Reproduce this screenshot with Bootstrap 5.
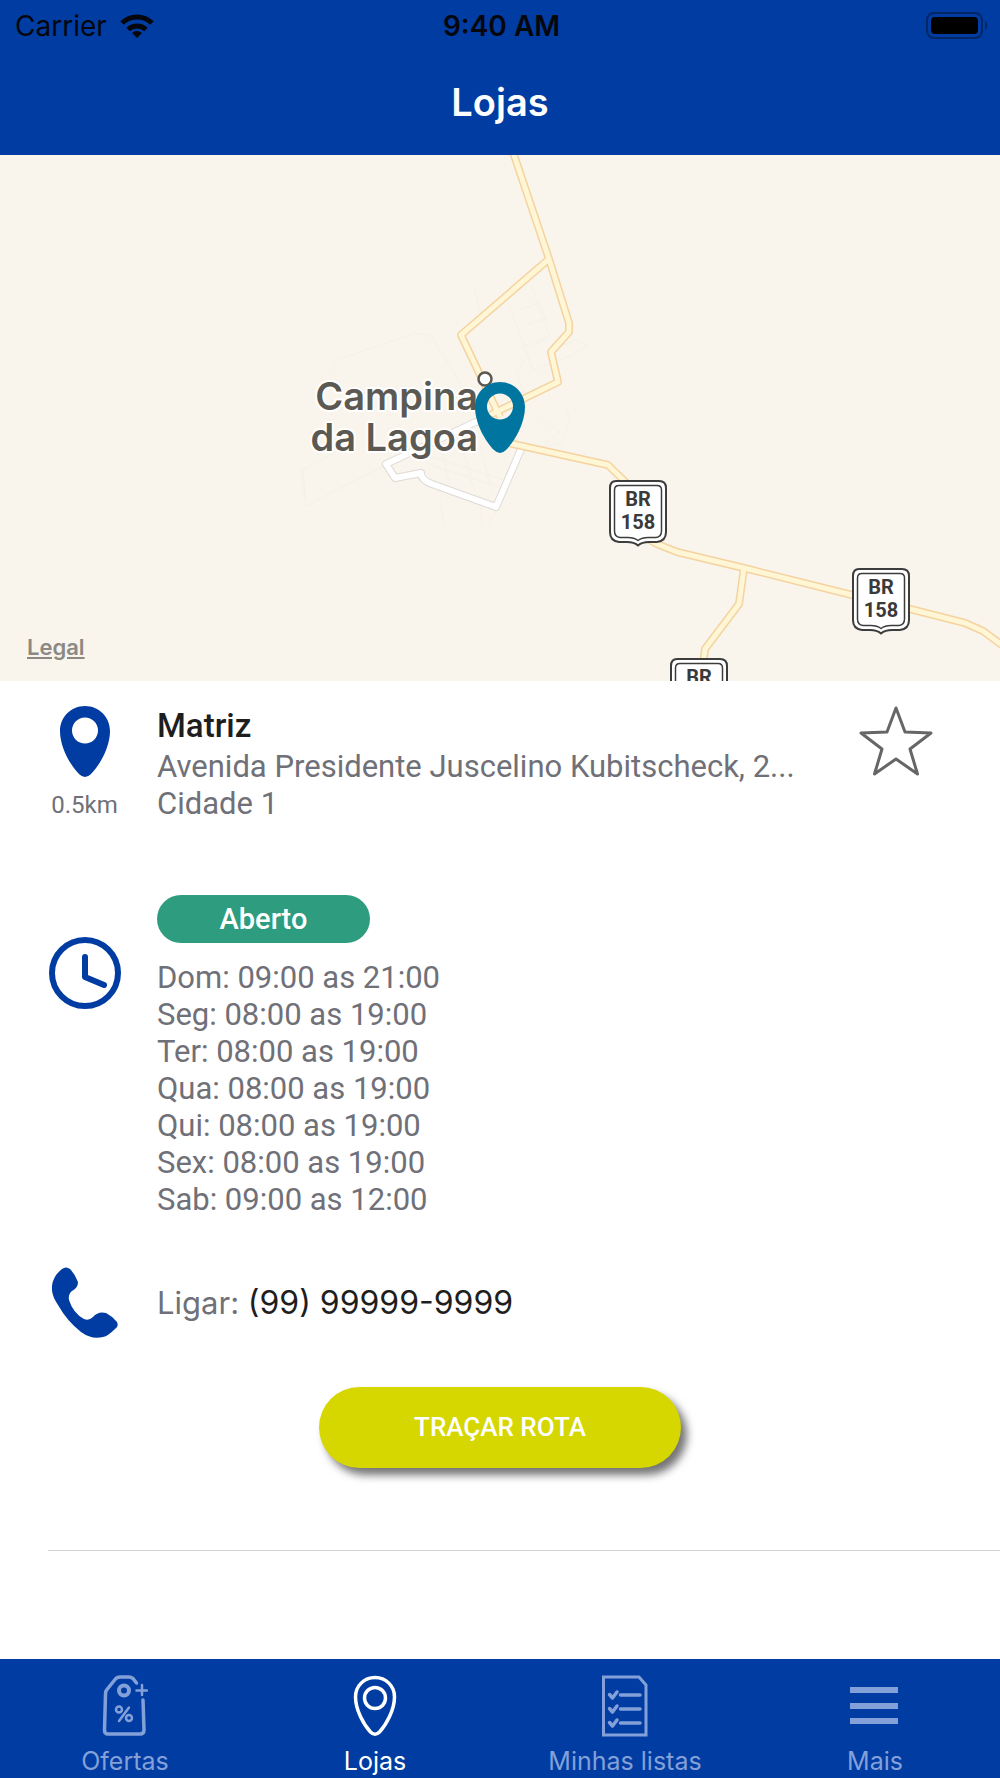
<!DOCTYPE html>
<html lang="pt-BR">
<head>
<meta charset="utf-8">
<meta name="viewport" content="width=device-width, initial-scale=1">
<title>Lojas</title>
<link rel="stylesheet" href="https://cdn.jsdelivr.net/npm/bootstrap@5.3.0/dist/css/bootstrap.min.css">
<style>
  :root { --brand: #003ca2; --brand-soft: #83a0d9; --ink: #1e1e1e; --muted: #6f7078; }
  body { font-family: Roboto, "Liberation Sans", sans-serif; color: var(--ink); background: #fff; }
  .ui-font { font-family: Inter, "Liberation Sans", sans-serif; }
  .top-area { background: var(--brand); height: 155px; }
  .status-bar { height: 51px; padding: 0 12px 0 15px; font-size: 28px; line-height: 32px; color: #05070c; }
  .status-bar > * { flex: 1 1 0; }
  .status-carrier { gap: 13px; }
  .page-title { font-size: 38px; line-height: 48px; font-weight: 600; padding-top: 27px; }
  .map-area { height: 526px; background: #f9f4ec; overflow: hidden; }
  .map-area > svg { display: block; width: 100%; height: 100%; }
  .legal-link { left: 27px; bottom: 20px; font-size: 22px; line-height: 28px; font-weight: 600; color: #8b8984; }
  .road-edge { fill: none; stroke: #f5d3a0; stroke-width: 8; stroke-linejoin: round; }
  .road-fill { fill: none; stroke: #fef6d5; stroke-width: 5; stroke-linejoin: round; }
  .street-edge { fill: none; stroke: #dedad5; stroke-width: 8; stroke-linejoin: round; }
  .street-fill { fill: none; stroke: #fff; stroke-width: 6; stroke-linejoin: round; }
  .town-lines { fill: none; stroke: #f5f0e8; stroke-width: 1; }
  .city-label { font: 600 38px Inter, "Liberation Sans", sans-serif; fill: #5c5952; stroke: #fff; stroke-width: 4; paint-order: stroke; stroke-linejoin: round; text-anchor: end; }
  .shield-text { font: 700 20px Roboto, "Liberation Sans", sans-serif; fill: #3a3a3a; text-anchor: middle; }
  .info-row { display: flex; gap: 36px; padding: 0 48px; }
  .icon-col { width: 73px; flex: none; display: flex; flex-direction: column; align-items: center; }
  .body-text { font-size: 31px; line-height: 37px; color: var(--muted); }
  .shop-name { font-size: 33px; line-height: 40px; font-weight: 500; margin-bottom: 2px; color: var(--ink); }
  .distance { font-size: 24px; line-height: 30px; color: var(--muted); margin-top: 12px; }
  .shop-row { padding-top: 25px; }
  .hours-row { padding-top: 73px; }
  .status-pill { width: 213px; height: 48px; border-radius: 24px; background: #2d9c7f; font-size: 29px; line-height: 48px; font-weight: 500; margin-bottom: 16px; padding: 0; }
  .hours-icon { padding-top: 42px; }
  .phone-row { padding-top: 49px; align-items: center; }
  .phone-text { font-size: 31px; line-height: 37px; color: var(--muted); }
  .phone-text a { color: var(--ink); text-decoration: none; font-size: 32px; }
  .route-btn { width: 362px; height: 81px; border-radius: 41px; margin-top: 49px; background: #d6d600; color: #fff; font-size: 26px; font-weight: 500; border: 0; box-shadow: 6px 7px 9px rgba(0,0,0,.55); }
  .route-btn:hover { background: #c6c600; color: #fff; }
  .divider { margin: 82px 0 0 48px; border-top: 1px solid #d2d2d2; }
  .tab-bar { background: var(--brand); height: 119px; padding-top: 14px; }
  .tab-bar a { flex: 1 1 0; color: var(--brand-soft); text-decoration: none; font-size: 25px; line-height: 30px; }
  .tab-bar a.active { color: #fff; }
  .tab-bar svg { display: block; margin: 0 auto 9px; }
</style>
<script src="https://cdn.jsdelivr.net/npm/bootstrap@5.3.0/dist/js/bootstrap.bundle.min.js"></script>
</head>
<body>
<div class="d-flex flex-column min-vh-100">
  <header class="top-area ui-font">
    <div class="status-bar d-flex align-items-center">
      <div class="status-carrier d-flex align-items-center">
        <span>Carrier</span>
        <svg width="34" height="24" viewBox="0 0 34 24" aria-hidden="true" fill="none" stroke="#05070c" stroke-width="5">
          <path d="M2 9a21.500 21.500 0 0 1 30 0"/><path d="M8 15.500a13 13 0 0 1 18 0"/><path d="M17 24l-5-5a7.500 7.500 0 0 1 10 0z" fill="#05070c" stroke="none"/>
        </svg>
      </div>
      <div class="text-center fw-semibold">9:40 AM</div>
      <div class="d-flex justify-content-end">
        <svg width="62" height="27" viewBox="0 0 62 27" aria-hidden="true">
          <rect x="1" y="1" width="55" height="25" rx="7" fill="none" stroke="#022765" stroke-width="2"/>
          <rect x="5" y="5" width="47" height="17" rx="4" fill="#000"/>
          <path d="M59 9c3 1 3 8 0 9z" fill="#022765"/>
        </svg>
      </div>
    </div>
    <h1 class="page-title text-white text-center mb-0">Lojas</h1>
  </header>

  <main class="flex-grow-1">
    <section class="map-area position-relative" aria-label="Mapa">
      <svg viewBox="0 0 1000 526" preserveAspectRatio="xMidYMid slice">
        <defs>
          <path id="pin" d="M25 0C39 0 50 11 50 25C50 42 39 60 31 68Q25 74 19 68C11 60 0 42 0 25C0 11 11 0 25 0ZM25 11.500a13 13 0 1 0 0 26a13 13 0 1 0 0-26z" fill-rule="evenodd"/>
          <g id="shield">
            <path d="M7 1H50Q57 1 57 8V52Q57 61 48 62H40Q33 62 29 65.500Q25 62 18 62H10Q1 61 1 52V8Q1 1 7 1Z" fill="#fff" stroke="#3d3d3d" stroke-width="2"/>
            <path d="M10 5.500H48Q52.500 5.500 52.500 10V51Q52.500 57 47 57.500H39Q33 57.500 29 60.500Q25 57.500 19 57.500H11Q5.500 57 5.500 51V10Q5.500 5.500 10 5.500Z" fill="#fff" stroke="#3d3d3d" stroke-width="1.500"/>
            <text class="shield-text" x="29" y="26">BR</text>
            <text class="shield-text" x="29" y="49">158</text>
          </g>
        </defs>
        <g class="town-lines">
          <path d="M334 216V206L415 178L431 181L460 228M301 315L306 351L395 305M306 351L303 315L345 292M474 134l7 24M509 150l24 65 38-14 17-11-13-5-22 10M531 129l18 52-28 11M524 205l-8 13 10 24M520 155l20-7 8 22M527 170l20-8M533 190l18-8M566 252l4 12-8 24-28 7M440 345l4 25M480 340l2 30M508 335l-20 35M425 300l80 25M430 310l76 24M440 290l10 40M460 285l14 50M480 290l12 48M540 262l20 15-25 20"/>
        </g>
        <g>
          <path class="street-edge" d="M522 292L496 352L432 329Q421 325 421 318L395 323L386 309L480 265"/>
          <path class="street-fill" d="M522 292L496 352L432 329Q421 325 421 318L395 323L386 309L480 265"/>
        </g>
        <g class="road-edge">
          <path d="M513-3L549 104L569 168V177L551 197L558 227L490 260M549 104L461 180L500 262M505 287L513 289L608 310L640 341"/>
          <path d="M645 382L657 389L677 397L744 413L852 440L910 454L965 468L983 476L1002 490M744 413L739 449L705 494L703 510"/>
        </g>
        <g class="road-fill">
          <path d="M513-3L549 104L569 168V177L551 197L558 227L490 260M549 104L461 180L500 262M505 287L513 289L608 310L640 341"/>
          <path d="M645 382L657 389L677 397L744 413L852 440L910 454L965 468L983 476L1002 490M744 413L739 449L705 494L703 510"/>
        </g>
        <circle cx="485" cy="224" r="6.500" fill="#fff" stroke="#5c5952" stroke-width="2.500"/>
        <text class="city-label" x="478" y="255">Campina</text>
        <text class="city-label" x="478" y="296">da Lagoa</text>
        <use href="#pin" x="475" y="227" fill="#0075a0"/>
        <use href="#shield" x="609" y="325"/>
        <use href="#shield" x="852" y="413"/>
        <use href="#shield" x="670" y="503"/>
      </svg>
      <a href="#" class="legal-link position-absolute ui-font">Legal</a>
    </section>

    <section class="info-row shop-row">
      <div class="icon-col">
        <svg width="50" height="72" viewBox="0 0 50 72" aria-hidden="true"><use href="#pin" fill="#003ca2"/></svg>
        <span class="distance">0.5km</span>
      </div>
      <div class="flex-grow-1 overflow-hidden body-text">
        <h2 class="shop-name text-truncate">Matriz</h2>
        <div class="text-truncate">Avenida Presidente Juscelino Kubitscheck, 2...</div>
        <div>Cidade 1</div>
      </div>
      <button type="button" class="btn p-0 border-0 align-self-start me-3" aria-label="Favoritar">
        <svg class="d-block" width="80" height="72" viewBox="0 0 80 72" fill="none" stroke="#666" stroke-width="3" stroke-linejoin="round">
          <path d="M40 2L49 26L75 27L54 43L61.500 68L40 53L18.500 68L26 43L5 27L31 26Z"/>
        </svg>
      </button>
    </section>

    <section class="info-row hours-row">
      <div class="icon-col hours-icon">
        <svg width="72" height="72" viewBox="0 0 72 72" aria-hidden="true" fill="none" stroke="#003ca2" stroke-linecap="round" stroke-linejoin="round">
          <circle cx="36" cy="36" r="33" stroke-width="6"/><path d="M36 20V40L55 48" stroke-width="6"/>
        </svg>
      </div>
      <div class="body-text">
        <div class="status-pill text-white text-center">Aberto</div>
        <ul class="list-unstyled mb-0">
          <li>Dom: 09:00 as 21:00</li>
          <li>Seg: 08:00 as 19:00</li>
          <li>Ter: 08:00 as 19:00</li>
          <li>Qua: 08:00 as 19:00</li>
          <li>Qui: 08:00 as 19:00</li>
          <li>Sex: 08:00 as 19:00</li>
          <li>Sab: 09:00 as 12:00</li>
        </ul>
      </div>
    </section>

    <section class="info-row phone-row">
      <div class="icon-col">
        <svg width="66" height="71" viewBox="0 0 66 71" aria-hidden="true" fill="#003ca2">
          <path d="M10 2Q14-1 18 2Q23 7 26 15Q26 21 20 24Q16 27 17 33Q21 46 32 52Q37 54 41 50Q46 44 54 46Q60 49 65 55Q67 60 63 62Q56 69 51 70Q40 73 29 65Q15 54 6 38Q-1 28 0 19Q1 9 10 2Z"/>
        </svg>
      </div>
      <div class="phone-text ui-font">Ligar: <a href="tel:99999999999">(99) 99999-9999</a></div>
    </section>

    <div class="text-center"><button type="button" class="btn route-btn">TRAÇAR ROTA</button></div>
    <div class="divider"></div>
  </main>

  <nav class="tab-bar d-flex text-center ui-font" aria-label="Principal">
    <a href="#">
      <svg width="46" height="64" viewBox="0 0 46 64" aria-hidden="true" fill="none" stroke="currentColor" stroke-width="3.500" stroke-linecap="round" stroke-linejoin="round">
        <path d="M34.500 10L31 5.500Q29 4 27 4H18Q15 4 13 6.500L5 16.500Q3.500 18 3.500 21L2.500 57Q2.500 61 6 61H38Q42 61 42 57L41 27"/>
        <circle cx="22" cy="17.500" r="5" stroke-width="4"/><path d="M34.500 17.500H45M40 12V22" stroke-width="2.500"/>
        <g stroke-width="2.500"><path d="M27 34.500L17 48"/><circle cx="17" cy="36.500" r="3"/><circle cx="27" cy="45" r="3"/></g>
      </svg>Ofertas</a>
    <a href="#" class="active" aria-current="page">
      <svg width="46" height="64" viewBox="0 0 46 64" aria-hidden="true" fill="none" stroke="currentColor" stroke-width="3.500">
        <path d="M23 4.500C34 4.500 42.500 13 42.500 24C42.500 37 34 52 27.500 59Q23 63.500 18.500 59C12 52 3.500 37 3.500 24C3.500 13 12 4.500 23 4.500Z"/><circle cx="23" cy="25" r="10.500"/>
      </svg>Lojas</a>
    <a href="#">
      <svg width="46" height="64" viewBox="0 0 46 64" aria-hidden="true" fill="none" stroke="currentColor" stroke-width="3">
        <path d="M1.500 4H37L44 12V62H1.500Z"/>
        <path d="M18.500 22H38M18.500 36H38M18.500 50H38" stroke-width="3.500" stroke-linecap="round"/>
        <path d="M7.500 21.500l3 3.500 4.500-6M7.500 35.500l3 3.500 4.500-6M7.500 49.500l3 3.500 4.500-6" stroke-width="3.500" stroke-linecap="round" stroke-linejoin="round"/>
      </svg>Minhas listas</a>
    <a href="#">
      <svg width="50" height="64" viewBox="0 0 50 64" aria-hidden="true" fill="currentColor">
        <path d="M0 14H48V20H0ZM0 30H48V36H0ZM0 45H48V51H0Z"/>
      </svg>Mais</a>
  </nav>
</div>
</body>
</html>
